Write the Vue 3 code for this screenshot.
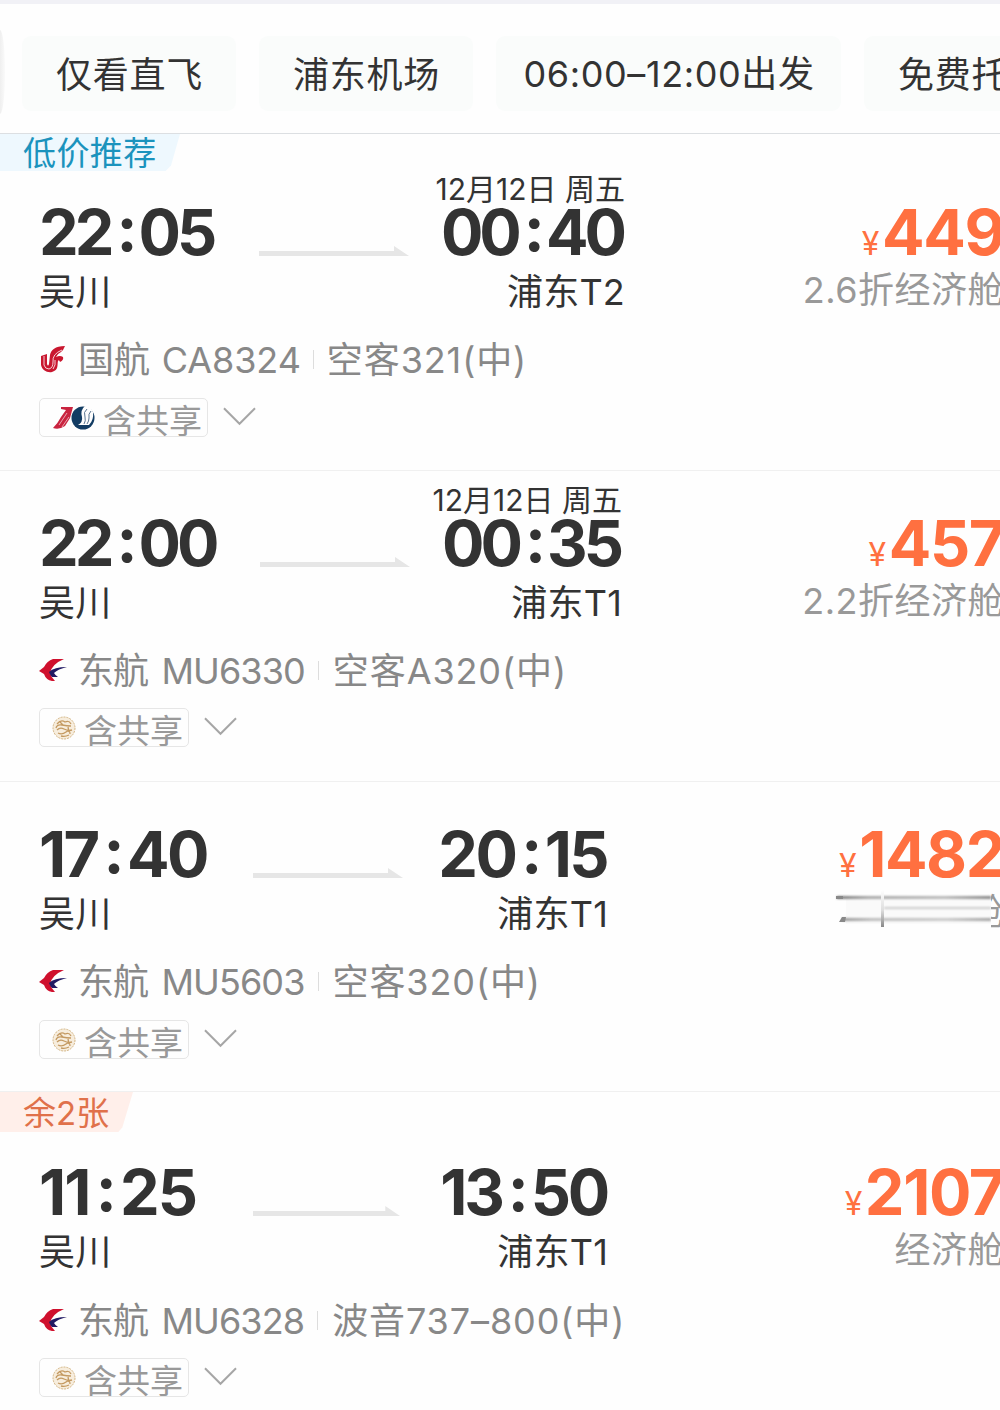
<template>
  <div class="page">
    <div class="filters">
      <span class="filter-edge"></span>
      <button v-for="f in filters" :key="f.text" class="filter" :class="f.size">{{ f.text }}</button>
    </div>

    <section v-for="item in flights" :key="item.no" class="flight" :class="[item.layout, { flagged: item.flag }]">
      <div v-if="item.flag" class="flag" :class="item.flag.type">{{ item.flag.text }}</div>
      <div class="main">
        <div class="leg">
          <div class="depart">
            <div class="date"></div>
            <div class="time">{{ item.from[0] }}<span class="colon">:</span>{{ item.from[1] }}</div>
            <div class="city">吴川</div>
          </div>
          <svg class="arrow" viewBox="0 0 150 12" preserveAspectRatio="none">
            <path d="M0 5H135V0L150 10H0Z" fill="#e6e6e6"/>
          </svg>
          <div class="arrive">
            <div class="date">{{ item.date }}</div>
            <div class="time">{{ item.to[0] }}<span class="colon">:</span>{{ item.to[1] }}</div>
            <div class="city">{{ item.airport }}</div>
          </div>
        </div>
        <div class="fare">
          <div class="price"><span class="yen">¥</span>{{ item.price }}</div>
          <div class="cabin">
            <svg v-if="item.hidden" class="smear" width="157" height="46" viewBox="0 0 157 46">
              <defs>
                <linearGradient id="sm" x1="0" x2="1" y1="0" y2="0">
                  <stop offset="0" stop-color="#777"/>
                  <stop offset=".2" stop-color="#aaa"/>
                  <stop offset=".7" stop-color="#bbb"/>
                  <stop offset="1" stop-color="#888"/>
                </linearGradient>
                <linearGradient id="sv" x1="0" x2="0" y1="0" y2="1">
                  <stop offset="0" stop-color="#fefefe"/>
                  <stop offset=".55" stop-color="#ddd"/>
                  <stop offset="1" stop-color="#888"/>
                </linearGradient>
                <filter id="soft" x="-5%" y="-100%" width="110%" height="300%"><feGaussianBlur stdDeviation="1 1.3"/></filter>
              </defs>
              <rect width="157" height="46" fill="#fefefe"/>
              <rect x="12" y="9" width="145" height="28" fill="#fafafa"/>
              <rect x="3" y="9" width="154" height="3" fill="url(#sm)" filter="url(#soft)"/>
              <rect x="50" y="20" width="107" height="2" fill="#ccc" filter="url(#soft)"/>
              <rect x="8" y="31" width="149" height="3" fill="url(#sm)" opacity=".75" filter="url(#soft)"/>
              <rect x="47" y="3" width="3" height="37" fill="url(#sv)"/>
              <path d="M2 9h7v3H2zM8 30h4l-1 5H5z" fill="#888"/>
            </svg>
            {{ item.cabin }}
          </div>
        </div>
      </div>

      <div class="airline">
        <svg v-if="item.logo === 'ca'" class="logo" viewBox="0 0 28 28">
          <path d="M26 1C16 1 12 5 11 10L10 19Q9 22 8 19V9L2 11V20C3 25 8 28 13 27C20 25 18 20 19 16Q20 14 21 17Q25 15 24 12Q21 10 17 12Q18 9 22 7L24 5Z" fill="#c9172f"/>
          <path d="M5 11V20Q6 24 10 24Q14 23 14 17Q13 9 23 5M16 15Q17 20 14 24" fill="none" stroke="#fff" stroke-width=".8"/>
        </svg>
        <svg v-else class="logo" viewBox="0 0 28 28">
          <path d="M25 3H14Q8 5 5 11L0 15L5 18Q7 24 13 25H16Q12 21 11 17Q13 8 25 3Z" fill="#cf102d"/>
          <path d="M28 11Q15 11 10 16Q11 19 13 21H19Q16 19 15 17Q19 13 28 11Z" fill="#211a63"/>
        </svg>
        <span class="carrier">{{ item.carrier }} {{ item.no }}</span>
        <i class="sep"></i>
        <span class="plane">{{ item.plane }}</span>
      </div>

      <div class="share">
        <span class="share-box">
          <svg v-if="item.logo === 'ca'" class="pair" viewBox="0 0 44 26">
            <path d="M9 2H21L18 13L13 21Q7 25 1 23Q6 18 9 12L14 5L9 4Z" fill="#c9233f"/>
            <path d="M15 8L7 20M17 12L10 22" stroke="#f3c4cb" stroke-width=".8" fill="none"/>
            <circle cx="31" cy="13" r="11.5" fill="#123c63"/>
            <path d="M33 1Q28 5 30 12Q31 17 26 20H37Q42 15 41 7Q39 2 33 1Z" fill="#fefefe"/>
            <path d="M35 4Q31 7 33 12Q34 16 32 19M39 6Q36 9 37 13Q37 16 35 19" fill="none" stroke="#5a7590" stroke-width="1"/>
          </svg>
          <svg v-else class="coin" viewBox="0 0 24 24">
            <circle cx="12" cy="12" r="11" fill="#f7eddd" stroke="#d3b483" stroke-width="1" stroke-dasharray="2 1"/>
            <path d="M5 8Q9 3 13 6Q17 4 19 8M4 12Q5 8 10 9T19 10M5 14Q8 11 12 13T20 14M6 17Q10 19 14 16T18 18M9 20Q13 21 17 19M8 6L11 9M16 11L17 16" fill="none" stroke="#c49a62" stroke-width="1.3"/>
          </svg>
          <span class="share-text">含共享</span>
        </span>
        <svg class="chevron" viewBox="0 0 34 20">
          <path d="M1 1L17 17L33 1" fill="none" stroke="#a6a6a6" stroke-width="2"/>
        </svg>
      </div>
    </section>
  </div>
</template>

<script setup>
const filters = [
  { text: '仅看直飞', size: 'short' },
  { text: '浦东机场', size: 'short' },
  { text: '06:00–12:00出发', size: 'long' },
  { text: '免费托运', size: 'short' }
]

const flights = [
  {
    flag: { text: '低价推荐', type: 'low' },
    from: ['22', '05'], to: ['00', '40'], date: '12月12日 周五', airport: '浦东T2',
    price: '449', cabin: '2.6折经济舱', logo: 'ca', carrier: '国航', no: 'CA8324', plane: '空客321(中)',
    layout: 'r1'
  },
  {
    from: ['22', '00'], to: ['00', '35'], date: '12月12日 周五', airport: '浦东T1',
    price: '457', cabin: '2.2折经济舱', logo: 'mu', carrier: '东航', no: 'MU6330', plane: '空客A320(中)',
    layout: 'r2'
  },
  {
    from: ['17', '40'], to: ['20', '15'], airport: '浦东T1',
    price: '1482', cabin: '舱', hidden: true, logo: 'mu', carrier: '东航', no: 'MU5603', plane: '空客320(中)',
    layout: 'r3'
  },
  {
    flag: { text: '余2张', type: 'left' },
    from: ['11', '25'], to: ['13', '50'], airport: '浦东T1',
    price: '2107', cabin: '经济舱', logo: 'mu', carrier: '东航', no: 'MU6328', plane: '波音737–800(中)',
    layout: 'r4'
  }
]
</script>

<style>
body { background: #fefefe; overflow: hidden; }
</style>

<style scoped>
.page {
  width: 1000px; height: 1410px; overflow: hidden;
  box-sizing: border-box;
  border-top: 4px solid #f1f1f6;
  background: #fefefe; color: #333;
  font-family: Inter, "Noto Sans CJK SC", sans-serif;
  font-size: 36px; font-weight: 400;
  white-space: nowrap;
}

.filters {
  height: 129px;
  border-bottom: 1px solid #dcdfe2;
  display: flex; gap: 23px; align-items: flex-start;
}
.filter-edge {
  flex: none; width: 5px; height: 84px; margin: 26px -6px 0 0;
  border-radius: 0 5px 5px 0 / 0 42px 42px 0;
  background: linear-gradient(90deg, #efefef, #fafafa);
}
.filter {
  flex: none; margin-top: 32px; padding: 4px 0 0 1px;
  width: 214px; height: 75px; box-sizing: border-box;
  border: none; border-radius: 9px;
  background: #fafcfb; color: #333;
  font: inherit; letter-spacing: 0.8px; line-height: 71px;
}
.filter.long { width: 345px; padding-top: 1px; letter-spacing: 0.6px; }

.flight {
  box-sizing: border-box; height: 311px;
  padding-top: 15px;
  border-bottom: 1px solid #f0f0f0;
}
.flight.r3 { height: 310px; }
.flight.flagged { padding-top: 0; height: 337px; }

.flag {
  height: 37px; line-height: 38px; margin-bottom: 4px;
  padding-left: 23px; box-sizing: border-box;
  font-size: 33px; letter-spacing: 0.4px;
}
.flag.low {
  width: 180px; background: #eef8fe; color: #1b93bd;
  clip-path: polygon(0 0, 100% 0, 95% 85%, 92% 100%, 0 100%);
}
.flag.left {
  width: 133px; height: 40px; line-height: 42px; letter-spacing: 0;
  background: #ffefea; color: #e0714a;
  clip-path: polygon(0 0, 100% 0, 92% 88%, 89% 100%, 0 100%);
}

.main { display: flex; justify-content: space-between; padding-left: 40px; }
.leg { display: grid; grid-template-columns: 219px 150px 1fr; width: 585px; }
.r2 .leg { grid-template-columns: 220px 150px 1fr; width: 582px; }
.r3 .leg, .r4 .leg { grid-template-columns: 213px 150px 1fr; width: 568px; }
.date { height: 30px; line-height: 29px; font-size: 30px; letter-spacing: 0; }
.time {
  height: 54px; line-height: 54px;
  font-size: 63px; font-weight: 650; letter-spacing: -4px;
}
.r3 .time { letter-spacing: -2.6px; }
.r4 .time { letter-spacing: -3.2px; }
.r4 .depart .time { letter-spacing: -1.8px; }
.depart .time { margin-left: -1px; }
.arrive .time { margin-right: 2px; }
.r3 .arrive .time, .r4 .arrive .time { margin-right: 1px; }
.colon { position: relative; top: -4px; margin: 0 5px 0 6px; }
.city { height: 66px; line-height: 67px; letter-spacing: 0.2px; }
.depart .city { margin-left: -1px; }
.arrow { width: 150px; height: 12px; margin-top: 71px; }
.r4 .arrow { width: 147px; }
.arrive { display: flex; flex-direction: column; align-items: flex-end; }

.fare { text-align: right; padding-top: 30px; margin-right: -4px; }
.price {
  height: 54px; line-height: 54px;
  color: #ff7040; font-size: 63px; font-weight: 650; letter-spacing: -1.4px;
}
.yen { font-size: 32px; font-weight: 400; margin-right: 4px; }
.cabin { height: 60px; line-height: 62px; color: #999; position: relative; letter-spacing: 0.5px; }
.smear { position: absolute; right: 13px; top: 6px; }

.airline {
  display: flex; align-items: center; height: 68px;
  padding-left: 39px; color: #888;
}
.carrier, .plane { margin-top: -4px; }
.logo { width: 28px; height: 28px; margin-right: 11px; }
.carrier { letter-spacing: -0.9px; word-spacing: 4px; }
.r1 .carrier { letter-spacing: -0.1px; word-spacing: 2px; }
.plane { letter-spacing: 0.9px; }
.sep { width: 1px; height: 19px; margin: 0 14px 0 13px; background: #ddd; }
.r1 .sep { margin: 0 13px 0 12px; }

.share { display: flex; align-items: center; padding: 4px 0 0 39px; }
.r1 .share, .r3 .share { padding-top: 5px; }
.r4 .main { margin-top: -1px; }
.r4 .airline { margin-top: 1px; }
.share-box {
  display: flex; align-items: center; box-sizing: border-box;
  height: 39px; padding: 0 5px 0 13px;
  border: 1px solid #e6e6e6; border-radius: 5px;
  color: #999; font-size: 33px; line-height: 39px;
}
.share-text { margin-top: 8px; }
.pair { width: 44px; height: 26px; margin: 0 7px 0 -1px; }
.coin { width: 24px; height: 24px; margin: 0 8px 0 -1px; }
.chevron { width: 33px; height: 20px; margin: -2px 0 0 15px; }
</style>
